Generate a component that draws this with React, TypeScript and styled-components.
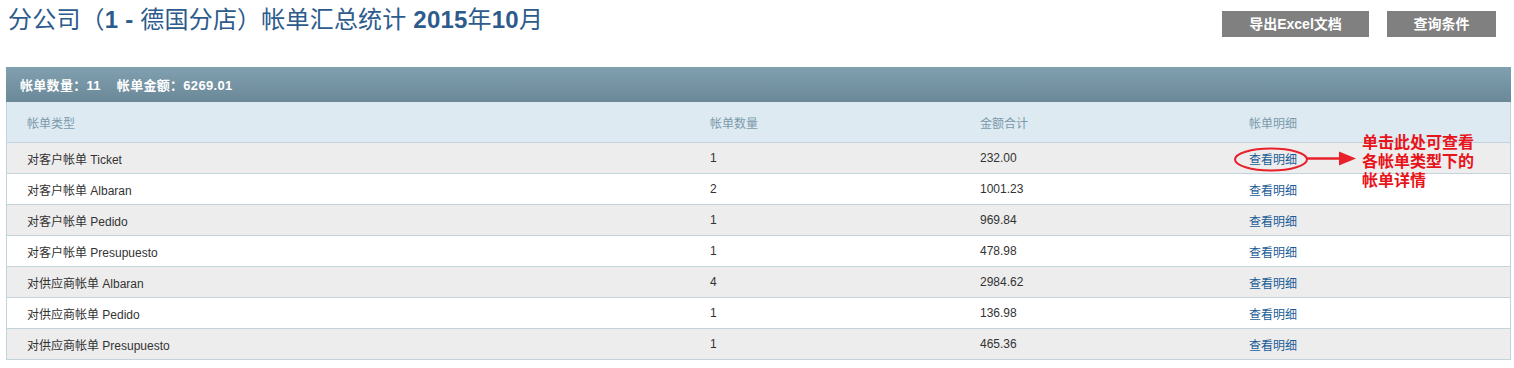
import React from 'react'
import styled, { createGlobalStyle } from 'styled-components'

const GlobalStyle = createGlobalStyle`
  body {
    margin: 0;
    background: #fff;
    font-family: "Liberation Sans", "Noto Sans CJK SC", sans-serif;
  }
`

const rows = [
  { type: '对客户帐单 Ticket', count: 1, total: '232.00' },
  { type: '对客户帐单 Albaran', count: 2, total: '1001.23' },
  { type: '对客户帐单 Pedido', count: 1, total: '969.84' },
  { type: '对客户帐单 Presupuesto', count: 1, total: '478.98' },
  { type: '对供应商帐单 Albaran', count: 4, total: '2984.62' },
  { type: '对供应商帐单 Pedido', count: 1, total: '136.98' },
  { type: '对供应商帐单 Presupuesto', count: 1, total: '465.36' }
]

const App = () => {
  return (
    <Page>
      <GlobalStyle />
      <TopBar>
        <Title>
          分公司（<b>1 -</b> 德国分店）帐单汇总统计 <b>2015</b>年<b>10</b>月
        </Title>
        <Actions>
          <Button $width={101}>导出Excel文档</Button>
          <Button $width={63}>查询条件</Button>
        </Actions>
      </TopBar>
      <Panel>
        <Summary>
          <span>帐单数量：11</span>
          <span>帐单金额：6269.01</span>
        </Summary>
        <Table>
          <colgroup>
            <col style={{ width: 683 }} />
            <col style={{ width: 270 }} />
            <col style={{ width: 269 }} />
            <col />
          </colgroup>
          <thead>
            <tr>
              <Th>帐单类型</Th>
              <Th>帐单数量</Th>
              <Th>金额合计</Th>
              <Th>帐单明细</Th>
            </tr>
          </thead>
          <tbody>
            {rows.map((row, index) => {
              return (
                <Row key={index} $odd={index % 2 === 0}>
                  <Td>{row.type}</Td>
                  <Td>{row.count}</Td>
                  <Td>{row.total}</Td>
                  <Td><DetailLink href='#'>查看明细</DetailLink></Td>
                </Row>
              )
            })}
          </tbody>
        </Table>
      </Panel>
      <Callout width='126' height='30' viewBox='0 0 126 30'>
        <ellipse cx='38' cy='13.5' rx='36' ry='11' fill='none' stroke='#e8202a' strokeWidth='2' />
        <line x1='74' y1='12.5' x2='108' y2='12.5' stroke='#e8202a' strokeWidth='2.5' />
        <polygon points='106,5.5 123,12.5 106,19.5' fill='#e8202a' />
      </Callout>
      <Note>
        单击此处可查看<br />
        各帐单类型下的<br />
        帐单详情
      </Note>
    </Page>
  )
}

export default App

const Page = styled.div`
  position: relative;
  width: 1514px;
`

const TopBar = styled.div`
  display: flex;
  justify-content: space-between;
  align-items: flex-start;
  height: 67px;
  padding: 0 18px 0 8px;
  box-sizing: border-box;
`

const Title = styled.h1`
  margin: 6px 0 0;
  font-size: 24px;
  font-weight: normal;
  line-height: 28px;
  letter-spacing: 0.2px;
  color: #2d5b8c;
  b {
    font-weight: bold;
  }
`

const Actions = styled.div`
  display: flex;
  gap: 18px;
  margin-top: 11px;
`

const Button = styled.div<{ $width: number }>`
  width: ${({ $width }) => { return `${$width}px` }};
  height: 26px;
  line-height: 26px;
  padding: 0 23px;
  background: #808080;
  color: #fff;
  font-size: 14px;
  font-weight: bold;
  text-align: center;
`

const Panel = styled.div`
  margin: 0 3px 0 6px;
  border: 1px solid #c3d3dd;
  border-top: none;
`

const Summary = styled.div`
  display: flex;
  gap: 16px;
  height: 35px;
  align-items: center;
  padding-left: 14px;
  margin: 0 -1px;
  background: linear-gradient(#809faf, #6a8898);
  color: #fff;
  font-size: 13px;
  font-weight: bold;
  letter-spacing: 0.3px;
`

const Table = styled.table`
  width: 100%;
  border-collapse: collapse;
  table-layout: fixed;
  font-size: 12px;
`

const Th = styled.th`
  height: 40px;
  padding: 0 0 0 20px;
  text-align: left;
  font-weight: normal;
  color: #7c9aab;
  background: #ddeaf2;
`

const Row = styled.tr<{ $odd: boolean }>`
  background: ${({ $odd }) => { return $odd ? '#ededed' : '#fff' }};
`

const Td = styled.td`
  height: 30px;
  padding: 0 0 0 20px;
  color: #333;
  border-top: 1px solid #c3d3dd;
`

const DetailLink = styled.a`
  color: #1a5c96;
  text-decoration: none;
`

const Callout = styled.svg`
  position: absolute;
  left: 1233px;
  top: 146px;
`

const Note = styled.div`
  position: absolute;
  left: 1362px;
  top: 133px;
  font-size: 16px;
  line-height: 19px;
  font-weight: bold;
  color: #e8141b;
`
